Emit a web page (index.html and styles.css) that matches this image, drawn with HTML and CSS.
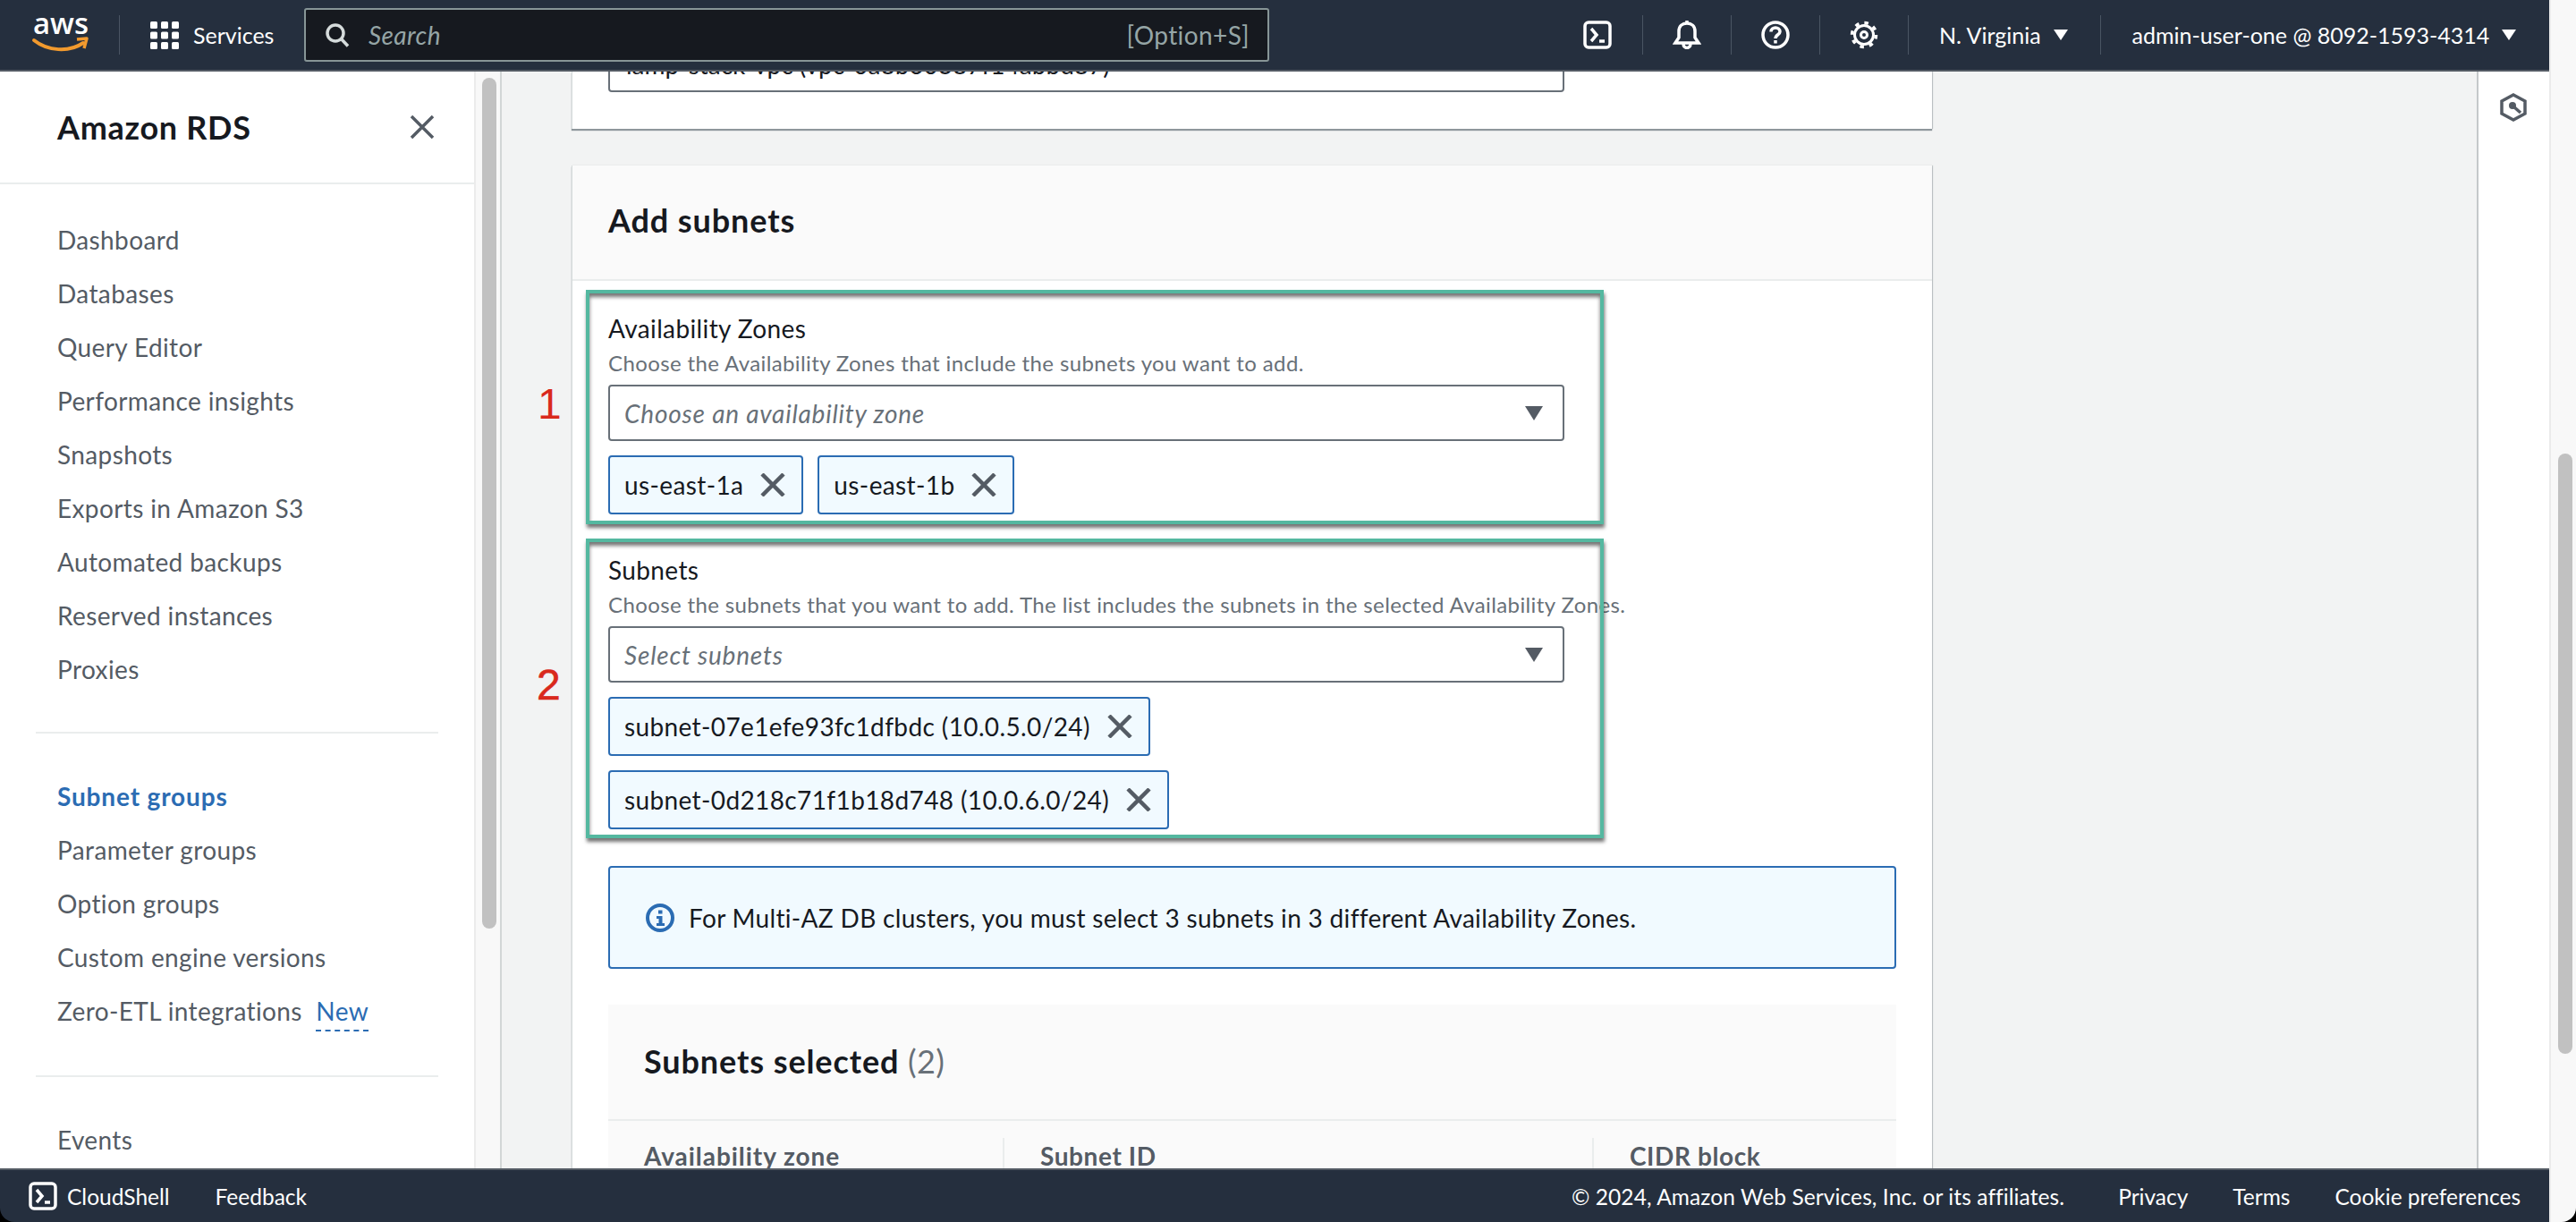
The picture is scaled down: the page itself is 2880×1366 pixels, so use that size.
FILE: index.html
```html
<!DOCTYPE html>
<html>

<head>
    <title>Amazon RDS - Subnet groups</title>
    <link rel="stylesheet" href="styles.css">
</head>

<body>
    <div class="window">
        <div class="app">

            <!-- Top navigation -->
            <header class="topbar">
                <svg class="aws-logo" viewBox="0 0 62 40" width="62" height="40">
                    <text x="0" y="19" class="aws-logo-text" textLength="62" lengthAdjust="spacingAndGlyphs">aws</text>
                    <path d="M1 26 C16 38 40 40 56 29" fill="none" stroke="#f29a2e" stroke-width="4" stroke-linecap="round"/>
                    <path d="M49 25 L60 24 L57 35" fill="none" stroke="#f29a2e" stroke-width="3.5" stroke-linejoin="round"/>
                </svg>
                <span class="bar-line bar-line-logo"></span>
                <svg class="grid-icon" viewBox="0 0 32 31" width="32" height="31" fill="#fff">
                    <rect x="0" y="0" width="8" height="8" rx="1.5"/><rect x="12" y="0" width="8" height="8" rx="1.5"/><rect x="24" y="0" width="8" height="8" rx="1.5"/>
                    <rect x="0" y="11.5" width="8" height="8" rx="1.5"/><rect x="12" y="11.5" width="8" height="8" rx="1.5"/><rect x="24" y="11.5" width="8" height="8" rx="1.5"/>
                    <rect x="0" y="23" width="8" height="8" rx="1.5"/><rect x="12" y="23" width="8" height="8" rx="1.5"/><rect x="24" y="23" width="8" height="8" rx="1.5"/>
                </svg>
                <span class="services">Services</span>
                <div class="search">
                    <svg class="search-icon" viewBox="0 0 27 27" width="27" height="27" fill="none" stroke="#d5dbdb" stroke-width="3.5">
                        <circle cx="11" cy="11" r="9"/>
                        <path d="M17.5 17.5 L25 25.5"/>
                    </svg>
                    <span class="search-text">Search</span>
                    <span class="search-key">[Option+S]</span>
                </div>
                <div class="bar-right">
                    <svg class="bar-icon" viewBox="0 0 32 32" width="32" height="32" fill="none" stroke="#fff" stroke-width="3.5">
                        <rect x="2" y="2" width="28" height="28" rx="4"/>
                        <path d="M9 9 L15 16 L9 23"/>
                        <path d="M18 23 H24"/>
                    </svg>
                    <span class="bar-line"></span>
                    <svg class="bar-icon" viewBox="0 0 32 32" width="32" height="32" fill="none" stroke="#fff" stroke-width="3.5">
                        <path d="M16 0 V3"/>
                        <path d="M3 25 H29 L25 19 V12 C25 6 21 3 16 3 C11 3 7 6 7 12 V19 Z"/>
                        <path d="M12 26 C12 32 20 32 20 26"/>
                    </svg>
                    <span class="bar-line"></span>
                    <svg class="bar-icon" viewBox="0 0 32 32" width="32" height="32" fill="none" stroke="#fff" stroke-width="3.5">
                        <circle cx="16" cy="16" r="14"/>
                        <path d="M11 12.5 C11 6.5 21 6.5 21 12.5 C21 16 16 15.5 16 20"/>
                        <path d="M16 22 V25.5"/>
                    </svg>
                    <span class="bar-line"></span>
                    <svg class="bar-icon" viewBox="0 0 32 32" width="32" height="32" fill="none" stroke="#fff">
                        <circle cx="16" cy="16" r="10.5" stroke-width="3"/>
                        <circle cx="16" cy="16" r="13.5" stroke-width="3.5" stroke-dasharray="4.5 6.1"/>
                        <circle cx="16" cy="16" r="3.5" stroke-width="3"/>
                    </svg>
                    <span class="bar-line"></span>
                    <span class="bar-menu bar-region">N. Virginia<i class="bar-caret"></i></span>
                    <span class="bar-line"></span>
                    <span class="bar-menu bar-user">admin-user-one @ 8092-1593-4314<i class="bar-caret"></i></span>
                </div>
            </header>

            <div class="workspace">

                <!-- Side navigation -->
                <nav class="sidebar">
                    <div class="side-head">
                        <span class="side-title">Amazon RDS</span>
                        <svg viewBox="0 0 28 28" width="28" height="28" fill="none" stroke="#545b64" stroke-width="3.5">
                            <path d="M2 2 L26 26 M26 2 L2 26"/>
                        </svg>
                    </div>
                    <ul class="side-list side-list-first">
                        <li>Dashboard</li>
                        <li>Databases</li>
                        <li>Query Editor</li>
                        <li>Performance insights</li>
                        <li>Snapshots</li>
                        <li>Exports in Amazon S3</li>
                        <li>Automated backups</li>
                        <li>Reserved instances</li>
                        <li>Proxies</li>
                    </ul>
                    <hr class="side-line">
                    <ul class="side-list">
                        <li class="active">Subnet groups</li>
                        <li>Parameter groups</li>
                        <li>Option groups</li>
                        <li>Custom engine versions</li>
                        <li>Zero-ETL integrations <span class="new-tag">New</span></li>
                    </ul>
                    <hr class="side-line side-line-second">
                    <ul class="side-list">
                        <li>Events</li>
                    </ul>
                </nav>
                <div class="side-scroll"><div class="side-thumb"></div></div>

                <!-- Main content -->
                <main class="content">
                    <section class="card card-vpc">
                        <div class="vpc-input">lamp-stack-vpc (vpc-0a8b60387f14abbd87)</div>
                    </section>

                    <section class="card">
                        <div class="card-head">Add subnets</div>
                        <div class="card-body">

                            <div class="field field-zones">
                                <div class="field-label">Availability Zones</div>
                                <div class="field-desc">Choose the Availability Zones that include the subnets you want to add.</div>
                                <div class="select">
                                    <span>Choose an availability zone</span>
                                    <i class="select-caret"></i>
                                </div>
                                <div class="tokens">
                                    <div class="token">us-east-1a
                                        <svg class="token-x" viewBox="0 0 28 26" width="28" height="26"><path d="M2 1 L26 25 M26 1 L2 25"/></svg>
                                    </div>
                                    <div class="token">us-east-1b
                                        <svg class="token-x" viewBox="0 0 28 26" width="28" height="26"><path d="M2 1 L26 25 M26 1 L2 25"/></svg>
                                    </div>
                                </div>
                                <div class="callout"></div>
                                <div class="mark mark-one">1</div>
                            </div>

                            <div class="field field-subnets">
                                <div class="field-label">Subnets</div>
                                <div class="field-desc">Choose the subnets that you want to add. The list includes the subnets in the selected Availability Zones.</div>
                                <div class="select">
                                    <span>Select subnets</span>
                                    <i class="select-caret"></i>
                                </div>
                                <div class="tokens tokens-stack">
                                    <div class="token">subnet-07e1efe93fc1dfbdc (10.0.5.0/24)
                                        <svg class="token-x" viewBox="0 0 28 26" width="28" height="26"><path d="M2 1 L26 25 M26 1 L2 25"/></svg>
                                    </div>
                                    <div class="token">subnet-0d218c71f1b18d748 (10.0.6.0/24)
                                        <svg class="token-x" viewBox="0 0 28 26" width="28" height="26"><path d="M2 1 L26 25 M26 1 L2 25"/></svg>
                                    </div>
                                </div>
                                <div class="callout"></div>
                                <div class="mark mark-two">2</div>
                            </div>

                            <div class="info">
                                <svg viewBox="0 0 32 32" width="32" height="32">
                                    <circle cx="16" cy="16" r="14" fill="none" stroke="#2b6cb3" stroke-width="4"/>
                                    <rect x="14" y="7.5" width="4.5" height="4" fill="#2b6cb3"/>
                                    <path d="M12 14 H18.5 V22 H21 V25 H12 V22 H14.5 V17 H12 Z" fill="#2b6cb3"/>
                                </svg>
                                <span>For Multi-AZ DB clusters, you must select 3 subnets in 3 different Availability Zones.</span>
                            </div>

                            <div class="selected">
                                <div class="selected-title">Subnets selected <span class="selected-count">(2)</span></div>
                                <div class="selected-head">
                                    <div class="col col-zone">Availability zone</div>
                                    <div class="col col-subnet">Subnet ID</div>
                                    <div class="col col-cidr">CIDR block</div>
                                </div>
                            </div>
                        </div>
                    </section>
                </main>

                <!-- Tools panel -->
                <aside class="tools">
                    <svg viewBox="0 0 30 32" width="30" height="32">
                        <path d="M15 2 L28 9 V23 L15 30 L2 23 V9 Z" fill="none" stroke="#545b64" stroke-width="3.5"/>
                        <circle cx="14" cy="14" r="4" fill="#545b64"/>
                        <path d="M15 15 L23 22" stroke="#545b64" stroke-width="3.5"/>
                    </svg>
                </aside>
            </div>

            <!-- Footer -->
            <footer class="footer">
                <svg viewBox="0 0 32 32" width="32" height="32" fill="none" stroke="#fff" stroke-width="3.5">
                    <rect x="2" y="2" width="28" height="28" rx="4"/>
                    <path d="M9 9 L15 16 L9 23"/>
                    <path d="M18 23 H24"/>
                </svg>
                <span class="foot-shell">CloudShell</span>
                <span class="foot-feedback">Feedback</span>
                <div class="foot-right">
                    <span class="foot-copy">© 2024, Amazon Web Services, Inc. or its affiliates.</span>
                    <span>Privacy</span>
                    <span>Terms</span>
                    <span>Cookie preferences</span>
                </div>
            </footer>
        </div>

        <div class="page-scroll"><div class="page-thumb"></div></div>
    </div>
</body>

</html>
```

FILE: styles.css
```css
* {
    box-sizing: border-box;
}

html,
body {
    margin: 0;
    height: 100%;
    overflow: hidden;
    background-color: #000;
}

body {
    font-family: Lato, "Noto Sans", sans-serif;
    font-size: 28px;
    letter-spacing: 0.38px;
    color: #16191f;
}

.window {
    display: flex;
    width: 2880px;
    height: 1366px;
    border-radius: 0 0 16px 16px;
    overflow: hidden;
}

.app {
    display: flex;
    flex-direction: column;
    width: 2850px;
    height: 100%;
}

/* Top navigation */
.topbar {
    display: flex;
    align-items: center;
    flex: none;
    height: 80px;
    padding-left: 37px;
    background-color: #252f3e;
    border-bottom: 2px solid #545b64;
    color: #fff;
    font-size: 25px;
    letter-spacing: 0;
}

.aws-logo {
    flex: none;
    margin-right: 34px;
    overflow: visible;
}

.aws-logo-text {
    font-family: "Open Sans", sans-serif;
    font-size: 33px;
    font-weight: 600;
    fill: #fff;
}

.bar-line {
    flex: none;
    width: 1px;
    height: 44px;
    background-color: #4a5563;
}

.bar-line-logo {
    margin-right: 34px;
}

.grid-icon {
    flex: none;
    margin-right: 16px;
}

.services {
    flex: none;
    width: 124px;
}

.search {
    display: flex;
    align-items: center;
    flex: none;
    width: 1079px;
    height: 60px;
    padding: 0 20px 0 22px;
    font-size: 28px;
    letter-spacing: 0.4px;
    background-color: #16191f;
    border: 2px solid #879596;
    border-radius: 3px;
    color: #95a5a6;
}

.search-icon {
    flex: none;
    margin-right: 21px;
}

.search-text {
    flex: 1;
    font-style: italic;
}

.bar-right {
    display: flex;
    align-items: center;
    margin-left: 351px;
}

.bar-icon {
    flex: none;
    margin: 0 33px 0 33px;
}

.bar-right .bar-icon:first-child {
    margin-left: 0;
    margin-right: 34px;
}

.bar-menu {
    display: flex;
    align-items: center;
    white-space: nowrap;
}

.bar-region {
    padding: 0 36px 0 34px;
}

.bar-user {
    padding-left: 35px;
}

.bar-caret {
    width: 0;
    height: 0;
    margin-left: 14px;
    border-left: 8px solid transparent;
    border-right: 8px solid transparent;
    border-top: 12px solid #fff;
}

/* Layout under the bar */
.workspace {
    display: flex;
    flex: 1;
    min-height: 0;
}

/* Side navigation */
.sidebar {
    flex: none;
    width: 530px;
    background-color: #fff;
    color: #545b64;
    overflow: hidden;
}

.side-head {
    display: flex;
    align-items: center;
    justify-content: space-between;
    height: 126px;
    padding: 0 44px 0 64px;
    border-bottom: 2px solid #eaeded;
}

.side-title {
    font-size: 36px;
    font-weight: 700;
    letter-spacing: 0.7px;
    color: #16191f;
}

.side-list {
    margin: 0;
    padding: 0 0 0 64px;
    list-style: none;
}

.side-list-first {
    padding-top: 32px;
}

.side-list li {
    height: 60px;
    line-height: 60px;
    white-space: nowrap;
}

.side-list .active {
    font-weight: 700;
    letter-spacing: 0.85px;
    color: #2b6cb3;
}

.side-line {
    width: 450px;
    height: 2px;
    margin: 40px 0 40px 40px;
    border: none;
    background-color: #eaeded;
}

.side-line-second {
    margin-top: 42px;
}

.new-tag {
    margin-left: 8px;
    padding-bottom: 4px;
    color: #2b6cb3;
    border-bottom: 2px dashed #2b6cb3;
}

.side-scroll {
    flex: none;
    width: 31px;
    padding: 7px 0 0 7px;
    background-color: #f8f8f8;
    border-left: 2px solid #ebebeb;
    border-right: 2px solid #d2d6d6;
}

.side-thumb {
    width: 16px;
    height: 951px;
    border-radius: 8px;
    background-color: #c1c1c1;
}

/* Main content */
.content {
    flex: 1;
    min-width: 0;
    padding-left: 78px;
    background-color: #f2f3f3;
    overflow: hidden;
}

.card {
    width: 1521px;
    background-color: #fff;
    border-left: 1px solid #d5dbdb;
    box-shadow: 0 2px 1px #8f979c, 1px 0 1px #c4c8ca;
}

.card-vpc {
    display: flow-root;
    height: 64px;
    margin-bottom: 41px;
    padding: 0 40px;
}

.vpc-input {
    width: 1069px;
    height: 62px;
    margin-top: -39px;
    padding: 0 18px;
    line-height: 58px;
    letter-spacing: 0;
    background-color: #fff;
    border: 2px solid #687078;
    border-radius: 4px;
}

.card-head {
    display: flex;
    align-items: center;
    height: 129px;
    padding-left: 40px;
    padding-bottom: 5px;
    font-size: 36px;
    font-weight: 700;
    letter-spacing: 0.9px;
    background-color: #fafafa;
    border-bottom: 2px solid #eaeded;
}

.card-body {
    padding: 33px 40px 0;
}

.field {
    position: relative;
    width: 1069px;
}

.field-subnets {
    margin-top: 42px;
}

.field-label {
    height: 40px;
    line-height: 40px;
}

.field-desc {
    height: 32px;
    margin-top: 3px;
    line-height: 32px;
    font-size: 24px;
    color: #687078;
    white-space: nowrap;
}

.select {
    display: flex;
    align-items: center;
    justify-content: space-between;
    height: 63px;
    margin-top: 8px;
    padding: 0 22px 0 16px;
    font-style: italic;
    letter-spacing: 0.8px;
    color: #687078;
    background-color: #fff;
    border: 2px solid #687078;
    border-radius: 4px;
}

.select-caret {
    width: 0;
    height: 0;
    border-left: 10px solid transparent;
    border-right: 10px solid transparent;
    border-top: 16px solid #545b64;
}

.tokens {
    display: flex;
    gap: 16px;
    margin-top: 16px;
}

.tokens-stack {
    flex-direction: column;
    align-items: flex-start;
    gap: 16px;
}

.token {
    display: flex;
    align-items: center;
    justify-content: space-between;
    height: 66px;
    padding: 0 18px 0 16px;
    gap: 19px;
    white-space: nowrap;
    background-color: #f1faff;
    border: 2px solid #2b6cb3;
    border-radius: 4px;
}

.token-x {
    flex: none;
    fill: none;
    stroke: #545b64;
    stroke-width: 4.5;
}

/* Annotations drawn over the form */
.callout {
    position: absolute;
    left: -25px;
    right: -44px;
    top: -23px;
    bottom: -11px;
    border: 4px solid #54b8a0;
    box-shadow: 1px 4px 4px rgba(0, 0, 0, 0.55), inset 0 4px 4px rgba(0, 0, 0, 0.55);
}

.field-subnets .callout {
    top: -15px;
    bottom: -10px;
}

.mark {
    position: absolute;
    line-height: 48px;
    font-family: "Liberation Sans", sans-serif;
    font-size: 48px;
    letter-spacing: 0;
    color: #d9291c;
}

.mark-one {
    left: -79px;
    top: 81px;
}

.mark-two {
    left: -80px;
    top: 125px;
    -webkit-text-stroke: 0.6px #d9291c;
}

/* Info box */
.info {
    display: flex;
    align-items: center;
    gap: 16px;
    height: 115px;
    margin-top: 41px;
    padding-left: 40px;
    letter-spacing: 0.32px;
    background-color: #f1faff;
    border: 2px solid #2b6cb3;
    border-radius: 4px;
}

/* Subnets selected panel */
.selected {
    height: 400px;
    margin-top: 40px;
    background-color: #fafafa;
}

.selected-title {
    height: 130px;
    padding: 39px 0 0 40px;
    line-height: 48px;
    font-size: 36px;
    font-weight: 700;
    letter-spacing: 0.9px;
    border-bottom: 2px solid #eaeded;
}

.selected-count {
    font-weight: 400;
    letter-spacing: 0.4px;
    color: #687078;
}

.selected-head {
    display: flex;
    padding-top: 19px;
    font-weight: 700;
    letter-spacing: 0.6px;
    color: #545b64;
}

.col {
    height: 60px;
    line-height: 40px;
    padding-left: 42px;
}

.col-zone {
    width: 441px;
    padding-left: 40px;
    letter-spacing: 0.95px;
}

.col-subnet {
    width: 659px;
    padding-left: 40px;
    border-left: 2px solid #eaeded;
}

.col-cidr {
    padding-left: 40px;
    border-left: 2px solid #eaeded;
}

/* Tools panel */
.tools {
    flex: none;
    width: 81px;
    padding: 24px 0 0 24px;
    background-color: #fff;
    border-left: 2px solid #c4c8ca;
}

/* Footer */
.footer {
    display: flex;
    align-items: center;
    flex: none;
    height: 60px;
    padding-left: 32px;
    font-size: 24.5px;
    letter-spacing: 0;
    color: #fff;
    background-color: #252f3e;
    border-top: 2px solid #545b64;
}

.foot-shell {
    margin-left: 11px;
}

.foot-feedback {
    margin-left: 51px;
}

.foot-right {
    display: flex;
    gap: 50px;
    margin-left: auto;
    padding-right: 32px;
}

.foot-copy {
    margin-right: 10px;
    letter-spacing: 0.1px;
}

/* Page scrollbar */
.page-scroll {
    flex: none;
    width: 30px;
    padding: 507px 0 0 8px;
    background-color: #f8f8f8;
    border-left: 2px solid #ebebeb;
}

.page-thumb {
    width: 16px;
    height: 671px;
    border-radius: 8px;
    background-color: #c1c1c1;
}
```
